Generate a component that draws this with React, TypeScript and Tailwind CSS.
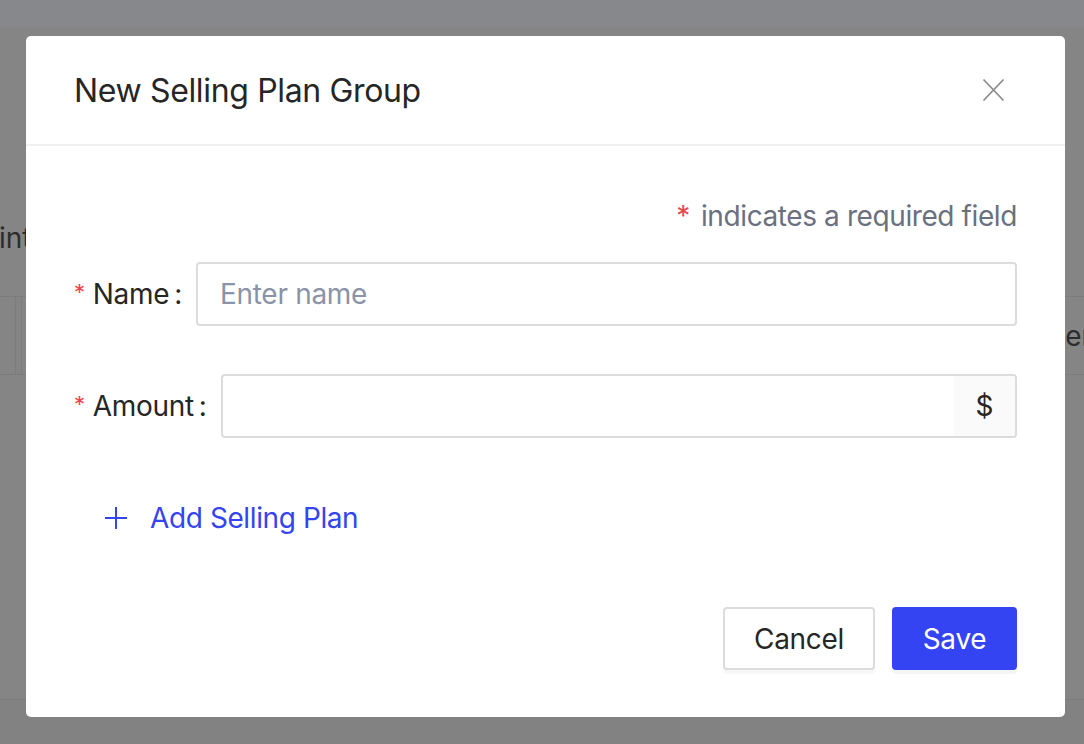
import React from "react";

const font = { fontFamily: "Inter, 'Noto Sans', 'Liberation Sans', sans-serif" };

function XIcon() {
  return (
    <svg width="23" height="24" viewBox="0 0 23 24" fill="none">
      <path d="M1.5 1.5L21.5 22.5M21.5 1.5L1.5 22.5" stroke="#8c8c8c" strokeWidth="1.8" />
    </svg>
  );
}

function PlusIcon() {
  return (
    <svg width="22" height="22" viewBox="0 0 22 22" fill="none">
      <path d="M11 0V22M0 11H22" stroke="#3444f0" strokeWidth="2" />
    </svg>
  );
}

export default function App() {
  return (
    <div className="relative w-[1084px] h-[744px] overflow-hidden bg-[#858585]" style={font}>
      {/* underlying page seen through the overlay */}
      <div className="flex flex-col h-full">
        <div className="h-[27px] bg-[#87888b]" />
        <div className="h-[196px]" />
        <div className="flex justify-between h-[30px] text-[28px] leading-[30px] text-[#2c2c2c]">
          <span className="-ml-[1px]">int</span>
        </div>
        <div className="h-[43px]" />
        <div className="flex justify-between h-[79px] border-y border-[#7c7c7c]">
          <div className="flex h-full">
            <div className="w-[16px] border-r border-[#7c7c7c]" />
            <div className="w-[6px] border-r border-[#7c7c7c]" />
          </div>
          <div className="self-center text-[28px] leading-[30px] text-[#2c2c2c] -mr-[8px]">er</div>
        </div>
        <div className="h-[325px] border-b border-[#7c7c7c]" />
        <div className="flex-1 bg-[#828282]" />
      </div>

      {/* modal */}
      <div className="absolute left-[26px] top-[36px] w-[1039px] h-[681px] bg-white rounded-[5px] flex flex-col">
        <div className="flex items-center justify-between px-[48px] py-[32px] border-b-2 border-[#f0f0f0] h-[110px]">
          <div className="text-[32px] leading-[44px] text-[#262626] tracking-[-0.35px] mt-[2px]">New Selling Plan Group</div>
          <div className="mr-[12px] mt-[-1px]">
            <XIcon />
          </div>
        </div>
        <div className="flex flex-col px-[48px] pt-[48px]">
          <div className="flex justify-end text-[28px] leading-[44px] text-[#6b7080] tracking-[-0.4px]">
            <span className="text-[#e5484d] mr-[11px]">*</span>
            <span>indicates a required field</span>
          </div>
          <div className="flex items-center h-[64px] mt-[24px]">
            <div className="flex items-center text-[28px] text-[#262626] tracking-[-0.3px]">
              <span className="text-[#ef4444] text-[22px] leading-none mr-[8px] mt-[-4px]">*</span>
              <span>Name</span>
              <span className="ml-[5px] mr-[14px]">:</span>
            </div>
            <div className="flex-1 h-[64px] border-2 border-[#dcdcdc] rounded-[4px] flex items-center px-[22px] text-[28px] text-[#8a93a7] tracking-[-0.3px]">
              Enter name
            </div>
          </div>
          <div className="flex items-center h-[64px] mt-[48px]">
            <div className="flex items-center text-[28px] text-[#262626] tracking-[-0.3px]">
              <span className="text-[#ef4444] text-[22px] leading-none mr-[8px] mt-[-4px]">*</span>
              <span>Amount</span>
              <span className="ml-[5px] mr-[14px]">:</span>
            </div>
            <div className="flex-1 h-[64px] border-2 border-[#dcdcdc] rounded-[4px] flex overflow-hidden">
              <div className="flex-1" />
              <div className="w-[61px] bg-[#fafafa] flex items-center justify-center text-[28px] text-[#262626]">$</div>
            </div>
          </div>
          <div className="flex items-center h-[64px] mt-[48px] pl-[31px] text-[28px] text-[#3444f0] tracking-[-0.4px]">
            <PlusIcon />
            <span className="ml-[23px]">Add Selling Plan</span>
          </div>
          <div className="flex justify-end gap-[17px] mt-[57px]">
            <div className="h-[63px] w-[152px] border-2 border-[#dcdcdc] rounded-[4px] bg-white flex items-center justify-center text-[28px] text-[#262626] tracking-[-0.3px] shadow-[0_4px_0_rgba(0,0,0,0.03)]">
              Cancel
            </div>
            <div className="h-[63px] w-[125px] rounded-[4px] bg-[#3444f2] flex items-center justify-center text-[28px] text-white tracking-[-0.3px] shadow-[0_4px_0_rgba(0,0,0,0.04)]">
              Save
            </div>
          </div>
        </div>
      </div>
    </div>
  );
}
